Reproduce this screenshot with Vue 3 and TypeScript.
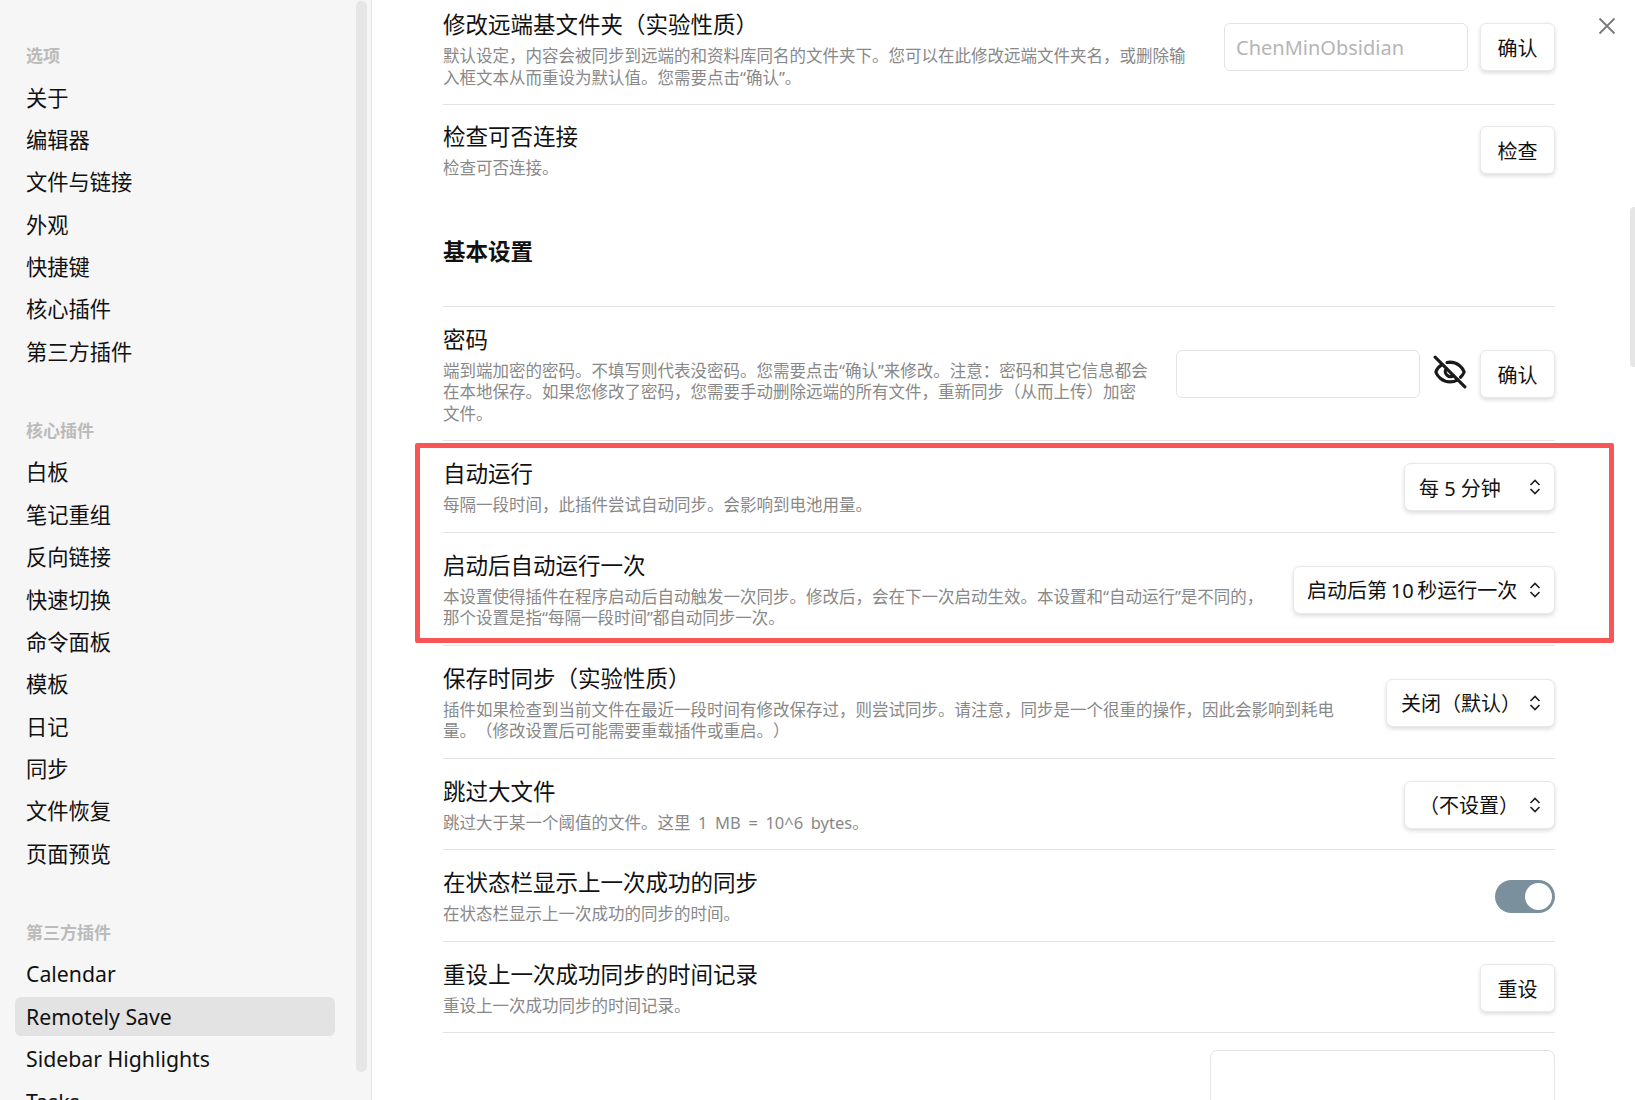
<script setup lang="ts">
const groups: { title: string; items: string[] }[] = [
  { title: '选项', items: ['关于', '编辑器', '文件与链接', '外观', '快捷键', '核心插件', '第三方插件'] },
  { title: '核心插件', items: ['白板', '笔记重组', '反向链接', '快速切换', '命令面板', '模板', '日记', '同步', '文件恢复', '页面预览'] },
  { title: '第三方插件', items: ['Calendar', 'Remotely Save', 'Sidebar Highlights', 'Tasks'] },
]
</script>

<template>
  <div class="shell">
    <aside class="sidebar">
      <nav class="nav">
        <section v-for="g in groups" :key="g.title" class="group">
          <div class="group-title">{{ g.title }}</div>
          <div
            v-for="it in g.items"
            :key="it"
            class="nav-item"
            :class="{ active: it === 'Remotely Save' }"
          >{{ it }}</div>
        </section>
      </nav>
      <div class="side-scroll"></div>
    </aside>

    <main class="main">
      <div class="row first">
        <div class="info">
          <div class="name">修改远端基文件夹（实验性质）</div>
          <div class="desc">默认设定，内容会被同步到远端的和资料库同名的文件夹下。您可以在此修改远端文件夹名，或删除输<br />入框文本从而重设为默认值。您需要点击“确认”。</div>
        </div>
        <div class="controls">
          <input class="text-input" placeholder="ChenMinObsidian" />
          <button class="btn">确认</button>
        </div>
      </div>

      <div class="row check">
        <div class="info">
          <div class="name">检查可否连接</div>
          <div class="desc">检查可否连接。</div>
        </div>
        <div class="controls"><button class="btn">检查</button></div>
      </div>

      <div class="heading">基本设置</div>

      <div class="row">
        <div class="info">
          <div class="name">密码</div>
          <div class="desc">端到端加密的密码。不填写则代表没密码。您需要点击“确认”来修改。注意：密码和其它信息都会<br />在本地保存。如果您修改了密码，您需要手动删除远端的所有文件，重新同步（从而上传）加密<br />文件。</div>
        </div>
        <div class="controls">
          <input class="text-input" />
          <svg class="eye" viewBox="0 0 24 24" fill="none" stroke="#1a1a1a" stroke-width="2.200" stroke-linecap="round" stroke-linejoin="round">
            <path d="M9.900 5.300A9.500 9.500 0 0 1 12 5c5.500 0 9 4 10 7-.5 1.300-1.400 2.600-2.600 3.700" />
            <path d="M6.300 6.800C4 8.200 2.600 10 2 12c1 3 4.500 7 10 7 2.100 0 3.900-.6 5.400-1.500" />
            <path d="M9.400 9.600a3.600 3.600 0 0 0 5 5" />
            <path d="M1.500 1.500 22.500 22.500" />
          </svg>
          <button class="btn">确认</button>
        </div>
      </div>

      <div class="row">
        <div class="info">
          <div class="name">自动运行</div>
          <div class="desc">每隔一段时间，此插件尝试自动同步。会影响到电池用量。</div>
        </div>
        <div class="controls">
          <div class="select w151"><span>每 5 分钟</span>
            <svg class="updown" viewBox="0 0 12 16" fill="none" stroke="#222" stroke-width="1.700"><path d="M1.500 6 6 1.500 10.500 6M1.500 10 6 14.500 10.500 10" /></svg>
          </div>
        </div>
      </div>

      <div class="row">
        <div class="info">
          <div class="name">启动后自动运行一次</div>
          <div class="desc">本设置使得插件在程序启动后自动触发一次同步。修改后，会在下一次启动生效。本设置和“自动运行”是不同的，<br />那个设置是指“每隔一段时间”都自动同步一次。</div>
        </div>
        <div class="controls">
          <div class="select w262"><span>启动后第 10 秒运行一次</span>
            <svg class="updown" viewBox="0 0 12 16" fill="none" stroke="#222" stroke-width="1.700"><path d="M1.500 6 6 1.500 10.500 6M1.500 10 6 14.500 10.500 10" /></svg>
          </div>
        </div>
      </div>

      <div class="row">
        <div class="info">
          <div class="name">保存时同步（实验性质）</div>
          <div class="desc">插件如果检查到当前文件在最近一段时间有修改保存过，则尝试同步。请注意，同步是一个很重的操作，因此会影响到耗电<br />量。（修改设置后可能需要重载插件或重启。）</div>
        </div>
        <div class="controls">
          <div class="select w169"><span>关闭（默认）</span>
            <svg class="updown" viewBox="0 0 12 16" fill="none" stroke="#222" stroke-width="1.700"><path d="M1.500 6 6 1.500 10.500 6M1.500 10 6 14.500 10.500 10" /></svg>
          </div>
        </div>
      </div>

      <div class="row">
        <div class="info">
          <div class="name">跳过大文件</div>
          <div class="desc spaced">跳过大于某一个阈值的文件。这里 1 MB = 10^6 bytes。</div>
        </div>
        <div class="controls">
          <div class="select w151"><span>（不设置）</span>
            <svg class="updown" viewBox="0 0 12 16" fill="none" stroke="#222" stroke-width="1.700"><path d="M1.500 6 6 1.500 10.500 6M1.500 10 6 14.500 10.500 10" /></svg>
          </div>
        </div>
      </div>

      <div class="row">
        <div class="info">
          <div class="name">在状态栏显示上一次成功的同步</div>
          <div class="desc">在状态栏显示上一次成功的同步的时间。</div>
        </div>
        <div class="controls controls-low">
          <div class="toggle"><div class="knob"></div></div>
        </div>
      </div>

      <div class="row">
        <div class="info">
          <div class="name">重设上一次成功同步的时间记录</div>
          <div class="desc">重设上一次成功同步的时间记录。</div>
        </div>
        <div class="controls controls-low"><button class="btn">重设</button></div>
      </div>

      <div class="row last">
        <div class="textarea"></div>
      </div>
    </main>

    <div class="highlight"></div>
    <svg class="close" viewBox="0 0 18 18" fill="none" stroke="#7a7a7a" stroke-width="1.800"><path d="M1.500 1.500 16.500 16.500M16.500 1.500 1.500 16.500" /></svg>
    <div class="main-scroll"></div>
  </div>
</template>

<style>
html, body { margin: 0; background: #fff; overflow: hidden; }
</style>

<style scoped>
.shell {
  position: relative;
  display: flex;
  width: 1635px;
  height: 1100px;
  overflow: hidden;
  background: #fff;
  font-family: "Noto Sans", "Noto Sans CJK SC", sans-serif;
  text-spacing-trim: space-all;
  color: #111;
}
.sidebar {
  display: flex;
  flex: none;
  width: 372px;
  box-sizing: border-box;
  height: 1100px;
  background: #f6f6f6;
  border-right: 1px solid #e3e3e3;
  overflow: hidden;
}
.nav {
  flex: none;
  width: 356px;
  box-sizing: border-box;
  padding: 36px 21px 0 15px;
}
.group { margin-bottom: 40px; }
.group-title {
  height: 39px;
  margin-bottom: 2.500px;
  padding-left: 11px;
  font-size: 17px;
  line-height: 39px;
  font-weight: 700;
  color: #bbb;
}
.nav-item {
  height: 39px;
  margin-bottom: 3.400px;
  padding-left: 11px;
  font-size: 21.250px;
  line-height: 39px;
  border-radius: 6px;
  white-space: nowrap;
}
.nav-item.active { background: #e3e3e3; }
.side-scroll {
  flex: none;
  width: 11px;
  height: 1071px;
  margin-top: 1px;
  background: #e6e6e6;
  border-radius: 5px;
}
.main {
  flex: 1;
  min-width: 0;
  box-sizing: border-box;
  height: 1100px;
  padding: 0 80px 0 71px;
  overflow: hidden;
}
.row {
  display: flex;
  align-items: center;
  justify-content: space-between;
  box-sizing: border-box;
  border-top: 1px solid #e3e3e3;
  padding: 16px 0 16px;
}
.row.first { margin-top: -8px; border-top: none; }
.row.check { padding: 15px 0 17px; }
.row.last { padding-top: 17px; align-items: flex-start; justify-content: flex-end; }
.info { min-width: 0; }
.name {
  font-size: 22.500px;
  line-height: 33px;
  margin-bottom: 4px;
  color: #111;
  white-space: nowrap;
}
.desc {
  font-size: 16.500px;
  line-height: 21.500px;
  color: #888;
  white-space: nowrap;
}
.desc.spaced { word-spacing: 3.300px; }
.controls {
  display: flex;
  align-items: center;
  gap: 12px;
  flex: none;
  padding-top: 2px;
}
.controls-low { padding-top: 3px; }
.first .controls { padding: 0 0 2px; }
.text-input {
  box-sizing: border-box;
  width: 244px;
  height: 48px;
  padding: 0 11px;
  border: 1px solid #e3e3e3;
  border-radius: 6px;
  outline: none;
  background: #fff;
  font: 20px "Noto Sans", "Noto Sans CJK SC", sans-serif;
}
.text-input::placeholder { color: #b5b5b5; }
.btn {
  box-sizing: border-box;
  width: 75px;
  height: 48px;
  padding: 0;
  border: 1px solid #e9e9e9;
  border-radius: 6px;
  background: #fff;
  box-shadow: 0 2px 4px rgba(0, 0, 0, 0.14);
  font: 20px "Noto Sans", "Noto Sans CJK SC", sans-serif;
  color: #111;
}
.eye { width: 34px; height: 34px; flex: none; margin: -5px 1px 0 1px; }
.select {
  display: flex;
  align-items: center;
  justify-content: space-between;
  box-sizing: border-box;
  height: 48px;
  padding: 0 13px 0 14px;
  border: 1px solid #e9e9e9;
  border-radius: 7px;
  background: #fff;
  box-shadow: 0 2px 4px rgba(0, 0, 0, 0.14);
  font-size: 20px;
  white-space: nowrap;
}
.w151 { width: 151px; }
.w262 { width: 262px; padding-left: 13px; word-spacing: -1.500px; }
.w169 { width: 169px; }
.updown { width: 12px; height: 16px; flex: none; }
.toggle {
  position: relative;
  width: 60px;
  height: 33px;
  border-radius: 17px;
  background: #7a909c;
}
.knob {
  position: absolute;
  right: 3px;
  top: 3px;
  width: 27px;
  height: 27px;
  border-radius: 50%;
  background: #fff;
}
.heading {
  height: 110px;
  line-height: 112px;
  font-size: 22.500px;
  font-weight: 700;
  color: #111;
}
.textarea {
  box-sizing: border-box;
  width: 345px;
  height: 120px;
  border: 1px solid #e3e3e3;
  border-radius: 7px;
}
.highlight {
  position: absolute;
  left: 415px;
  top: 443px;
  width: 1199px;
  height: 200px;
  box-sizing: border-box;
  border: 5px solid #fa5555;
  border-radius: 2px;
}
.close { position: absolute; left: 1598px; top: 17px; width: 18px; height: 18px; }
.main-scroll {
  position: absolute;
  left: 1630px;
  top: 207px;
  width: 5px;
  height: 160px;
  background: #e6e6e6;
  border-radius: 4px 0 0 4px;
}
</style>
